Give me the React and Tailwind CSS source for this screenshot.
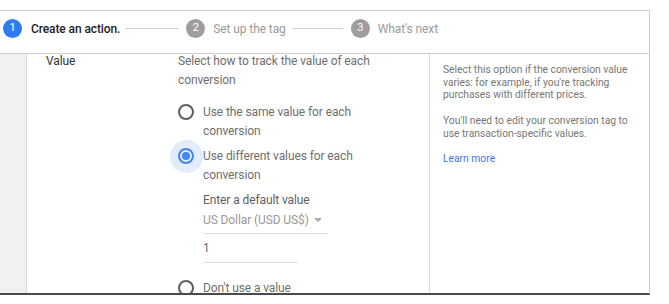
import React from "react";

function Radio({ checked }) {
  if (checked) {
    return (
      <span className="relative shrink-0 w-[16px] h-[16px] mt-[1.5px]">
        <span className="absolute left-[-8px] top-[-8px] w-[33px] h-[33px] rounded-full bg-[#e3ecfb]" />
        <span className="absolute inset-0 rounded-full border-2 border-[#4285f4] flex items-center justify-center">
          <span className="w-[8px] h-[8px] rounded-full bg-[#4285f4]" />
        </span>
      </span>
    );
  }
  return <span className="shrink-0 w-[16px] h-[16px] mt-[1.5px] rounded-full border-2 border-[#5f5f5f]" />;
}

export default function App() {
  return (
    <div className="w-[669px] h-[304px] bg-white overflow-hidden font-['Roboto',sans-serif]">
      <div className="h-[10px]" />
      <div className="w-[650px] h-[44px] border-t border-r border-b border-[#cfcfcf] flex items-center pb-[7px] pl-[3px] text-[12px] tracking-[-0.1px]">
        <span className="w-[19px] h-[19px] rounded-full bg-[#2f7cf0] text-white text-[11px] flex items-center justify-center">1</span>
        <span className="ml-[9px] font-medium text-[#222]">Create an action.</span>
        <span className="ml-[6px] w-[52px] h-px bg-[#cfcfcf]" />
        <span className="ml-[8px] w-[19px] h-[19px] rounded-full bg-[#9e9e9e] text-white text-[11px] flex items-center justify-center">2</span>
        <span className="ml-[8px] text-[#9a9a9a]">Set up the tag</span>
        <span className="ml-[6px] w-[51px] h-px bg-[#cfcfcf]" />
        <span className="ml-[8px] w-[19px] h-[19px] rounded-full bg-[#9e9e9e] text-white text-[11px] flex items-center justify-center">3</span>
        <span className="ml-[8px] text-[#9a9a9a]">What's next</span>
      </div>
      <div className="w-[650px] h-[241px] flex border-r border-[#c8c8c8] border-b-2 border-b-[#4a4a4a] overflow-hidden">
        <div className="w-[27px] shrink-0 bg-[#f1f1f1] border-r border-[#dcdcdc]" />
        <div className="w-[402px] shrink-0 flex pl-[19px] text-[12px] tracking-[-0.1px] leading-[19px] overflow-hidden">
          <div className="w-[132px] shrink-0 mt-[-2.5px] text-[#333]">Value</div>
          <div className="flex flex-col mt-[-2.5px] text-[#6f6f6f]">
            <p className="w-[205px]">Select how to track the value of each conversion</p>
            <div className="mt-[13px] flex gap-[9px]">
              <Radio />
              <span className="w-[160px]">Use the same value for each conversion</span>
            </div>
            <div className="mt-[6px] flex gap-[9px]">
              <Radio checked />
              <span className="w-[160px]">Use different values for each conversion</span>
            </div>
            <div className="pl-[25px] flex flex-col">
              <span className="mt-[6px] text-[#5f5f5f]">Enter a default value</span>
              <div className="mt-[1px] w-[125px] pb-[3px] border-b border-[#dedede] flex items-center text-[#9a9a9a] whitespace-nowrap">
                <span>US Dollar (USD US$)</span>
                <span className="ml-[5px] w-0 h-0 border-l-[4px] border-r-[4px] border-t-[4px] border-l-transparent border-r-transparent border-t-[#a8a8a8]" />
              </div>
              <div className="mt-[5px] w-[95px] pb-[4px] border-b border-[#dedede] text-[#6f6f6f]">1</div>
            </div>
            <div className="mt-[16px] flex gap-[9px]">
              <Radio />
              <span>Don't use a value</span>
            </div>
          </div>
        </div>
        <div className="flex-1 border-l border-[#dcdcdc] pl-[13px] pt-[10px] text-[10.3px] leading-[12.7px] text-[#777]">
          <p className="w-[200px]">Select this option if the conversion value varies: for example, if you're tracking purchases with different prices.</p>
          <p className="mt-[13px] w-[200px]">You'll need to edit your conversion tag to use transaction-specific values.</p>
          <p className="mt-[12px] text-[#3b78e7]">Learn more</p>
        </div>
      </div>
    </div>
  );
}
